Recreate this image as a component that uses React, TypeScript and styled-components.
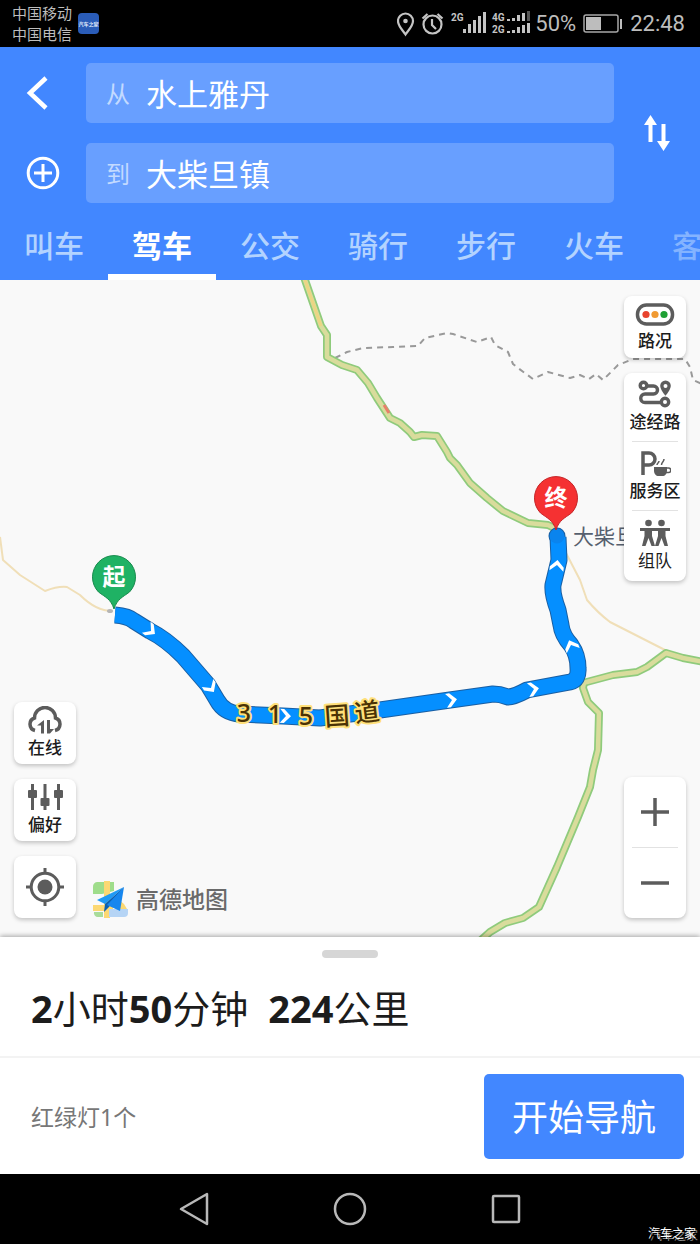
import React from "react";
import styled, { createGlobalStyle } from "styled-components";

const GlobalStyle = createGlobalStyle`
  * { box-sizing: border-box; }
  body {
    margin: 0;
    background: #000;
    font-family: "Noto Sans", "Noto Sans CJK SC", sans-serif;
    color: #1c1c1c;
  }
  button, input { font-family: inherit; }
  button { border: 0; padding: 0; background: none; color: inherit; cursor: pointer; }
  svg { display: block; flex: none; }
`;

const Screen = styled.div`
  display: flex;
  flex-direction: column;
  min-height: 100vh;
  overflow: hidden;
`;

/* ---------- Status bar ---------- */

const StatusBar = styled.div`
  display: flex;
  align-items: center;
  justify-content: space-between;
  height: 47px;
  padding: 0 15px 0 12px;
  background: #000;
  color: #bdbdbd;
`;

const StatusGroup = styled.div<{ $gap: number }>`
  display: flex;
  align-items: center;
  gap: ${(p) => p.$gap}px;
`;

const Carriers = styled.div`
  font-size: 15px;
  line-height: 21px;
`;

const AppBadge = styled.span`
  display: flex;
  align-items: center;
  justify-content: center;
  width: 21px;
  height: 21px;
  border-radius: 4px;
  background: #2a5cb8;
  color: #e6eefc;
  font-size: 5px;
  font-weight: 700;
`;

const StatusText = styled.span`
  font-family: Roboto, sans-serif;
  font-size: 22px;
  line-height: 24px;
`;

/* ---------- Header ---------- */

const Header = styled.header`
  background: #4287ff;
  color: #fff;
`;

const SearchArea = styled.div`
  display: grid;
  grid-template-columns: 86px 1fr 86px;
  padding-top: 16px;
`;

const SideButtons = styled.div`
  display: flex;
  flex-direction: column;
  gap: 20px;
`;

const SideButton = styled.button`
  display: flex;
  align-items: center;
  justify-content: center;
  height: 60px;
`;

const SwapButton = styled.button`
  display: flex;
  align-items: center;
  justify-content: center;
`;

const Fields = styled.div`
  display: flex;
  flex-direction: column;
  gap: 20px;
`;

const Field = styled.label`
  display: flex;
  align-items: center;
  gap: 16px;
  height: 60px;
  padding: 2px 20px 0;
  border-radius: 5px;
  background: #689fff;
`;

const FieldLabel = styled.span`
  color: #c3daff;
  font-size: 24px;
  line-height: 32px;
`;

const FieldInput = styled.input`
  flex: 1;
  min-width: 0;
  border: 0;
  padding: 0;
  outline: 0;
  background: transparent;
  color: #fff;
  font-size: 31px;
  line-height: 44px;
`;

const Tabs = styled.nav`
  display: flex;
  height: 77px;
  overflow: hidden;
`;

const Tab = styled.button<{ $active?: boolean; $faded?: boolean }>`
  flex: none;
  height: 77px;
  padding: 14px 24px 0;
  border-bottom: 6px solid ${(p) => (p.$active ? "#fff" : "transparent")};
  color: ${(p) => (p.$active ? "#fff" : p.$faded ? "#84b3ff" : "#b3d3ff")};
  font-size: 30px;
  font-weight: ${(p) => (p.$active ? 700 : 500)};
  line-height: 44px;
`;

/* ---------- Map ---------- */

const MapArea = styled.main`
  position: relative;
  flex: 1;
  min-height: 657px;
  background: #f9f9f9;
  overflow: hidden;
`;

const MapCanvas = styled.svg`
  position: absolute;
  inset: 0;
  width: 100%;
  height: 100%;
`;

const Overlay = styled.div`
  position: absolute;
  inset: 0;
  display: flex;
  justify-content: space-between;
  padding: 16px 14px 19px;
`;

const LeftControls = styled.div`
  display: flex;
  align-items: flex-end;
  gap: 16px;
`;

const Stack = styled.div<{ $spread?: boolean }>`
  display: flex;
  flex-direction: column;
  justify-content: ${(p) => (p.$spread ? "space-between" : "flex-end")};
  gap: 15px;
`;

const Card = styled.div`
  width: 62px;
  border-radius: 8px;
  background: #fff;
  box-shadow: 0 2px 4px rgba(0, 0, 0, 0.22);
`;

const ToolButton = styled.button<{ $height: number; $bold?: boolean }>`
  display: flex;
  flex-direction: column;
  align-items: center;
  justify-content: center;
  gap: 2px;
  width: 100%;
  height: ${(p) => p.$height}px;
  font-size: 17px;
  font-weight: ${(p) => (p.$bold ? 500 : 400)};
  line-height: 24px;
  white-space: nowrap;
`;

const Divider = styled.div`
  height: 1px;
  margin: 0 8px;
  background: #e2e2e2;
`;

const MapBrand = styled.div`
  display: flex;
  align-items: center;
  gap: 7px;
  color: #6a6a6a;
  font-size: 23px;
  font-weight: 500;
  line-height: 37px;
`;

/* ---------- Bottom sheet ---------- */

const Sheet = styled.section`
  position: relative;
  background: #fff;
  box-shadow: 0 -1px 5px rgba(0, 0, 0, 0.35);
`;

const Handle = styled.div`
  display: flex;
  justify-content: center;
  padding-top: 13px;

  &::before {
    content: "";
    width: 56px;
    height: 8px;
    border-radius: 4px;
    background: #d6d6d6;
  }
`;

const Summary = styled.h1`
  display: flex;
  gap: 20px;
  height: 100px;
  margin: 0;
  padding: 24px 31px 0;
  border-bottom: 2px solid #f3f3f3;
  font-size: 38px;
  font-weight: 400;
  line-height: 52px;

  strong { font-weight: 700; }
`;

const ActionRow = styled.div`
  display: flex;
  align-items: center;
  justify-content: space-between;
  height: 116px;
  padding: 0 16px 0 31px;
`;

const Hint = styled.span`
  padding-top: 2px;
  color: #777;
  font-size: 23px;
  line-height: 32px;
`;

const StartButton = styled.button`
  width: 200px;
  height: 85px;
  padding-top: 4px;
  border-radius: 5px;
  background: #4287ff;
  color: #fff;
  font-size: 36px;
  line-height: 52px;
`;

/* ---------- System navigation ---------- */

const SystemNav = styled.footer`
  position: relative;
  display: flex;
  align-items: center;
  justify-content: center;
  gap: 116px;
  height: 70px;
  background: #000;
`;

const SystemButton = styled.button`
  display: flex;
  align-items: center;
  justify-content: center;
  width: 40px;
  height: 40px;
`;

const Watermark = styled.span`
  position: absolute;
  right: 4px;
  bottom: 2px;
  color: #fff;
  font-size: 12px;
  line-height: 16px;
  text-shadow: 2px 2px 0 #8a8a8a;
`;

/* ---------- Icons ---------- */

const GREY = "#5c5c5c";

const SignalBars = ({ heights, width, step }: { heights: number[]; width: number; step: number }) => (
  <>
    {heights.map((h, i) => (
      <rect key={i} x={i * step} y={-h} width={width} height={h} />
    ))}
  </>
);

const StatusIcons = () => (
  <svg width="136" height="26" viewBox="0 0 136 26" fill="none" aria-hidden="true">
    <g stroke="#c4c4c4" strokeWidth="2.200">
      <path d="M8.500 23.500C5.500 19 1 15 1 10a7.500 7.500 0 0 1 15 0C16 15 11.500 19 8.500 23.500Z" />
      <circle cx="35.500" cy="13.500" r="9" />
      <path d="M35 8v6l4 4M25.500 7.500l5-4.500M45.500 7.500L40.500 3" />
    </g>
    <g fill="#c4c4c4">
      <circle cx="8.500" cy="10" r="2.300" />
      <g fontFamily="Roboto, sans-serif" fontWeight="700" fontSize="10">
        <text x="54" y="10">2G</text>
        <text x="95" y="10">4G</text>
        <text x="95" y="22">2G</text>
      </g>
      <g transform="translate(66 22)">
        <SignalBars heights={[4, 9, 13, 17, 21]} width={3} step={5} />
      </g>
      <g transform="translate(110 10)">
        <SignalBars heights={[2, 3, 6, 8]} width={3} step={5} />
        <rect x="20" y="-10" width="3" height="10" fill="#555" />
      </g>
      <g transform="translate(110 22)">
        <SignalBars heights={[2, 3, 6, 8, 10]} width={3} step={5} />
      </g>
    </g>
  </svg>
);

const BatteryIcon = () => (
  <svg width="40" height="20" viewBox="0 0 40 20" fill="none" aria-hidden="true">
    <rect x="1" y="1" width="34" height="17" rx="2" stroke="#a8a8a8" strokeWidth="1.500" />
    <rect x="3" y="3" width="15" height="13" fill="#bdbdbd" />
    <rect x="37" y="5" width="2" height="10" fill="#bdbdbd" />
  </svg>
);

const BackIcon = () => (
  <svg width="34" height="36" viewBox="0 0 34 36" fill="none" aria-hidden="true">
    <path d="M20 3L4 18l16 15" stroke="#fff" strokeWidth="4.500" />
  </svg>
);

const AddIcon = () => (
  <svg width="34" height="34" viewBox="0 0 34 34" fill="none" stroke="#fff" strokeWidth="3" aria-hidden="true">
    <circle cx="17" cy="17" r="14.800" />
    <path d="M17 8v18M8 17h18" />
  </svg>
);

const SwapIcon = () => (
  <svg width="28" height="38" viewBox="0 0 28 38" fill="#fff" aria-hidden="true">
    <path d="M7.500 1L14 11H9.500v17h-4V11H1ZM20.500 37L14 27h4.500V10h4v17H27Z" />
  </svg>
);

const TrafficIcon = () => (
  <svg width="40" height="26" viewBox="0 0 40 26" aria-hidden="true">
    <rect x="2.500" y="4" width="35" height="19" rx="9" fill="#fff" stroke={GREY} strokeWidth="3.500" />
    <circle cx="11" cy="13.500" r="3.600" fill="#e8432e" />
    <circle cx="20" cy="13.500" r="3.600" fill="#f09a32" />
    <circle cx="29" cy="13.500" r="3.600" fill="#1fa034" />
  </svg>
);

const WaypointIcon = () => (
  <svg width="34" height="28" viewBox="0 0 34 28" fill="none" stroke={GREY} strokeWidth="3.400" aria-hidden="true">
    <circle cx="5.500" cy="5.500" r="3.300" />
    <path d="M9 6h6.500a3.800 3.800 0 0 1 0 8H7a4.200 4.200 0 0 0 0 8.500h15" />
    <circle cx="27" cy="22" r="3.700" />
    <path
      d="M27.500 .500a5.300 5.300 0 0 0-5.300 5.300c0 4 5.300 10 5.300 10s5.300-6 5.300-10a5.300 5.300 0 0 0-5.300-5.300Zm0 3.500a2 2 0 1 1 0 4a2 2 0 1 1 0-4Z"
      fill={GREY}
      fillRule="evenodd"
      stroke="none"
    />
  </svg>
);

const ServiceIcon = () => (
  <svg width="32" height="28" viewBox="0 0 32 28" fill="none" stroke={GREY} aria-hidden="true">
    <path d="M4 26V4h6a5.500 5.500 0 0 1 0 12H4" strokeWidth="3.500" />
    <path d="M15 18h13v3.500c0 3.500-2 5.500-4.500 5.500h-4c-2.500 0-4.500-2-4.500-5.500Z" fill={GREY} stroke="none" />
    <path d="M27 19h2.500a1.800 1.800 0 0 1 0 4.500H27" strokeWidth="1.500" />
    <path d="M18 16c0-2 2-2 2-4M22.500 16c0-3 2.500-3 2.500-6" strokeWidth="1.500" />
  </svg>
);

const TeamIcon = () => (
  <svg width="32" height="28" viewBox="0 0 32 28" fill={GREY} aria-hidden="true">
    <circle cx="9.500" cy="4" r="3.300" />
    <circle cx="22.500" cy="4" r="3.300" />
    <path d="M1 9h30v3h-4.500v5L29 27h-3.500L22.500 19 19.500 27H16l3-10v-5h-6v5l3 10h-3.500L9.500 19 6.500 27H3l2.500-10v-5H1Z" />
  </svg>
);

const CloudIcon = () => (
  <svg width="36" height="28" viewBox="0 0 36 28" fill="none" aria-hidden="true">
    <path d="M8 24.500a6.500 6.500 0 0 1-.500-12.500 10.500 10.500 0 0 1 21 0 6.500 6.500 0 0 1-.500 12.500" stroke={GREY} strokeWidth="3.500" />
    <path d="M17 14v13.500h-3V19.500h-4ZM20 14h3v9h4l-4 4.500h-3Z" fill={GREY} />
  </svg>
);

const SlidersIcon = () => (
  <svg width="36" height="28" viewBox="0 0 36 28" fill={GREY} aria-hidden="true">
    <path d="M4 1h3v26H4zM16.500 1h3v26h-3zM30 1h3v26h-3z" />
    <rect x="1" y="7" width="9" height="8" rx="1" />
    <rect x="13.500" y="15" width="9" height="8" rx="1" />
    <rect x="27" y="7" width="9" height="8" rx="1" />
  </svg>
);

const LocateIcon = () => (
  <svg width="38" height="38" viewBox="0 0 38 38" fill="none" stroke={GREY} strokeWidth="3" aria-hidden="true">
    <circle cx="19" cy="19" r="13.800" />
    <path d="M19 0v6M19 32v6M0 19h6M32 19h6" />
    <circle cx="19" cy="19" r="7.500" fill={GREY} stroke="none" />
  </svg>
);

const ZoomIcon = ({ plus }: { plus?: boolean }) => (
  <svg width="28" height="28" viewBox="0 0 28 28" stroke={GREY} strokeWidth="3.500" aria-hidden="true">
    <path d={plus ? "M0 14h28M14 0v28" : "M0 14h28"} />
  </svg>
);

const BrandIcon = () => (
  <svg width="37" height="37" viewBox="0 0 37 37" aria-hidden="true">
    <path d="M5 1h17v9L10 13H1V6a5 5 0 0 1 4-5Z" fill="#9fdd8b" />
    <path d="M12 0h6v37h-6z" fill="#fcd873" />
    <path d="M1 24h20v6H1z" fill="#fcd873" />
    <path d="M2 31h9v5H6a4 4 0 0 1-4-5Z" fill="#a9dc9b" />
    <path d="M17 28h19v4a4 4 0 0 1-4 4H17Z" fill="#b5d4f5" />
    <path d="M25 17l7 6 3 5h-7l-6-4Z" fill="#fcd873" />
    <path d="M32 6L5 19l8 4Z" fill="#1f9af5" />
    <path d="M32 6L13 23l-1 8 5-5Z" fill="#0a5fb0" />
    <path d="M32 6L15 24l13 6Z" fill="#1686ee" />
  </svg>
);

/* ---------- Map drawing ---------- */

const GREEN_ROADS = [
  "M303 274L305 280 321 326 327 335 327 357 342 365 357 370 368 383 377 398 390 418 400 423 410 432 414 437 422 435 437 436 447 452 450 458 457 465 470 483 487 498 503 511 528 523 548 525 556 529",
  "M583 683L613 675 637 672 647 667 666 653 683 658 704 662",
  "M584 682L583 688 588 702 599 713 598 750 593 770 590 787 578 817 557 867 539 907 523 918 505 923 490 932 480 941",
];

const TRACKS = [
  "M0 537L3 560 20 575 45 591Q58 586 67 587L80 595Q96 611 112 611",
  "M566 553L580 580 587 600Q598 613 610 622L665 650",
];

const TRAIL =
  "M335 358L347 352 363 348 393 347 418 346 425 338 447 333 453 334 477 342 491 337 495 345 508 352 513 364 518 368 533 379 548 372 570 378 580 375 589 379 596 374 603 380 618 365 633 359 685 359 690 367 693 380 702 384";

const ROUTE =
  "M115 615Q128 616 134 621L150 631Q166 639 183 656L208 685 217 700Q224 713 240 714L283 716 320 718 380 710 450 700 493 694Q500 694 508 697 514 697 527 690L570 682Q579 680 578 668 578 655 571 645 562 635 561 625L558 610Q552 594 553 585L559 560 558 537";

const ARROWS: [number, number, number][] = [
  [151, 631, 38],
  [211, 688, 55],
  [286, 716, 2],
  [452, 700, -8],
  [534, 689, -10],
  [557, 565, -84],
  [571, 645, -112],
];

const ROAD_LABEL: [string, number, number, number][] = [
  ["3", 244, 713, 0],
  ["1", 275, 714, 0],
  ["5", 306, 716, 0],
  ["国", 337, 716, -4],
  ["道", 367, 712, -7],
];

const Pin = ({ x, y, color, edge, text }: { x: number; y: number; color: string; edge: string; text: string }) => (
  <g transform={`translate(${x} ${y})`}>
    <path
      d="M0 32C-3 22-9 20-15.500 15A21.500 21.500 0 1 1 15.500 15C9 20 3 22 0 32Z"
      fill={color}
      stroke={edge}
      strokeWidth="1"
    />
    <text y="8" textAnchor="middle" fontSize="23" fontWeight="700" fill="#fff">
      {text}
    </text>
  </g>
);

const RouteMap = () => (
  <MapCanvas viewBox="0 280 700 657" preserveAspectRatio="xMidYMid slice" role="img" aria-label="路线">
    <g fill="none" strokeLinejoin="round">
      {TRACKS.map((d) => (
        <path key={d} d={d} stroke="#f0dfb8" strokeWidth="2" />
      ))}
      <path d={TRAIL} stroke="#999" strokeWidth="2" strokeDasharray="6 5" />
      {GREEN_ROADS.map((d) => (
        <path key={d} d={d} stroke="#8fcb7c" strokeWidth="8" />
      ))}
      {GREEN_ROADS.map((d) => (
        <path key={d} d={d} stroke="#d9dc9c" strokeWidth="4.500" />
      ))}
      <path d="M305 280L321 326" stroke="#ecd584" strokeWidth="3" />
      <path d="M384 405L389 413" stroke="#e8806a" strokeWidth="3" />
      <path d={ROUTE} stroke="#1a5fa3" strokeWidth="17" />
      <circle cx="557" cy="536" r="8.500" fill="#1a5fa3" />
      <path d={ROUTE} stroke="#058fff" strokeWidth="15" />
      <circle cx="557" cy="536" r="7.500" fill="#0a84ee" />
      {ARROWS.map(([x, y, angle]) => (
        <path
          key={x}
          d="M-6 -7H-2L5 0L-2 7H-6L0 0Z"
          fill="#fff"
          transform={`translate(${x} ${y}) rotate(${angle})`}
        />
      ))}
    </g>
    <ellipse cx="110" cy="611" rx="3" ry="2" fill="#b5b5b5" />
    <g fontSize="25" fontWeight="500" textAnchor="middle" fill="#4a3205" stroke="#ffe07a" strokeWidth="4" paintOrder="stroke" strokeLinejoin="round">
      {ROAD_LABEL.map(([char, x, y, angle]) => (
        <text key={char} y="9" transform={`translate(${x} ${y}) rotate(${angle})`}>
          {char}
        </text>
      ))}
    </g>
    <text x="573" y="544" fontSize="21" fill="#56606e">大柴旦</text>
    <Pin x={114} y={577} color="#1fb264" edge="#168a4c" text="起" />
    <Pin x={556} y={498} color="#f53132" edge="#c52427" text="终" />
  </MapCanvas>
);

/* ---------- Page ---------- */

const TABS = ["叫车", "驾车", "公交", "骑行", "步行", "火车", "客"];

export default function App() {
  return (
    <Screen>
      <GlobalStyle />
      <StatusBar>
        <StatusGroup $gap={6}>
          <Carriers>
            <div>中国移动</div>
            <div>中国电信</div>
          </Carriers>
          <AppBadge>汽车之家</AppBadge>
        </StatusGroup>
        <StatusGroup $gap={7}>
          <StatusGroup $gap={2}>
            <StatusIcons />
            <StatusText>50%</StatusText>
          </StatusGroup>
          <BatteryIcon />
          <StatusText>22:48</StatusText>
        </StatusGroup>
      </StatusBar>

      <Header>
        <SearchArea>
          <SideButtons>
            <SideButton aria-label="返回"><BackIcon /></SideButton>
            <SideButton aria-label="添加途经点"><AddIcon /></SideButton>
          </SideButtons>
          <Fields>
            <Field>
              <FieldLabel>从</FieldLabel>
              <FieldInput defaultValue="水上雅丹" />
            </Field>
            <Field>
              <FieldLabel>到</FieldLabel>
              <FieldInput defaultValue="大柴旦镇" />
            </Field>
          </Fields>
          <SwapButton aria-label="交换起终点"><SwapIcon /></SwapButton>
        </SearchArea>
        <Tabs>
          {TABS.map((name, i) => (
            <Tab key={name} $active={i === 1} $faded={i === 6}>{name}</Tab>
          ))}
        </Tabs>
      </Header>

      <MapArea>
        <RouteMap />
        <Overlay>
          <LeftControls>
            <Stack>
              <Card><ToolButton $height={62} $bold><CloudIcon />在线</ToolButton></Card>
              <Card><ToolButton $height={62} $bold><SlidersIcon />偏好</ToolButton></Card>
              <Card><ToolButton $height={62} aria-label="定位"><LocateIcon /></ToolButton></Card>
            </Stack>
            <MapBrand><BrandIcon />高德地图</MapBrand>
          </LeftControls>
          <Stack $spread>
            <Stack>
              <Card><ToolButton $height={62} $bold><TrafficIcon />路况</ToolButton></Card>
              <Card>
                <ToolButton $height={68} $bold><WaypointIcon />途经路</ToolButton>
                <Divider />
                <ToolButton $height={68} $bold><ServiceIcon />服务区</ToolButton>
                <Divider />
                <ToolButton $height={70}><TeamIcon />组队</ToolButton>
              </Card>
            </Stack>
            <Card>
              <ToolButton $height={70} aria-label="放大"><ZoomIcon plus /></ToolButton>
              <Divider />
              <ToolButton $height={70} aria-label="缩小"><ZoomIcon /></ToolButton>
            </Card>
          </Stack>
        </Overlay>
      </MapArea>

      <Sheet>
        <Handle />
        <Summary>
          <span><strong>2</strong>小时<strong>50</strong>分钟</span>
          <span><strong>224</strong>公里</span>
        </Summary>
        <ActionRow>
          <Hint>红绿灯1个</Hint>
          <StartButton>开始导航</StartButton>
        </ActionRow>
      </Sheet>

      <SystemNav>
        <SystemButton aria-label="返回">
          <svg width="32" height="34" viewBox="0 0 32 34" fill="none" stroke="#b8b8b8" strokeWidth="2.500" strokeLinejoin="round">
            <path d="M3 17L29 2v30Z" />
          </svg>
        </SystemButton>
        <SystemButton aria-label="主页">
          <svg width="34" height="34" viewBox="0 0 34 34" fill="none" stroke="#b8b8b8" strokeWidth="2.500">
            <circle cx="17" cy="17" r="15" />
          </svg>
        </SystemButton>
        <SystemButton aria-label="最近任务">
          <svg width="30" height="30" viewBox="0 0 30 30" fill="none" stroke="#b8b8b8" strokeWidth="2.500">
            <rect x="2" y="2" width="26" height="26" rx="1" />
          </svg>
        </SystemButton>
        <Watermark>汽车之家</Watermark>
      </SystemNav>
    </Screen>
  );
}
